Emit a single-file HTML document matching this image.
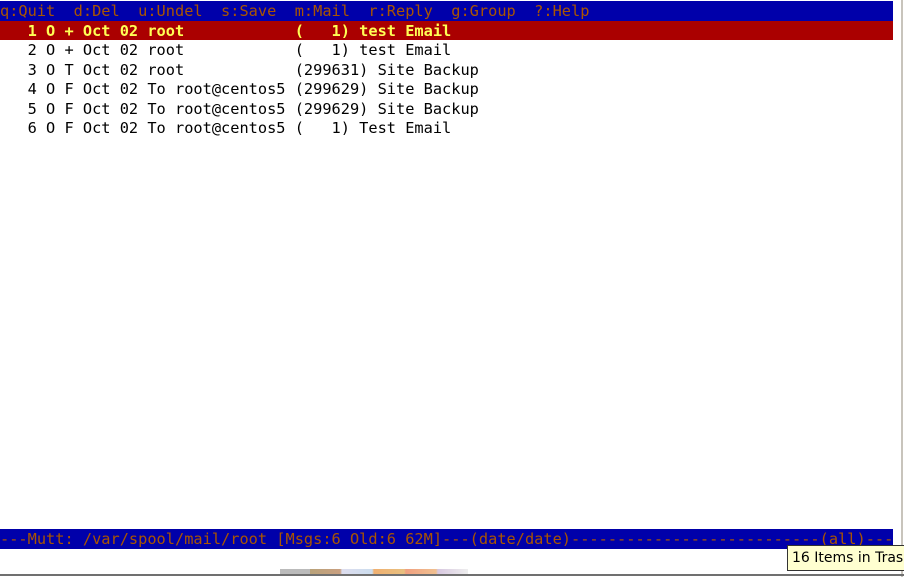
<!DOCTYPE html>
<html><head><meta charset="utf-8"><style>
html,body{margin:0;padding:0;background:#fff;width:904px;height:577px;overflow:hidden;position:relative}
.t{position:absolute;left:0;width:893px;height:19.5px;font-family:"DejaVu Sans Mono","Liberation Mono",monospace;font-size:15.3px;line-height:21px;white-space:pre;color:#000;overflow:hidden}
.bar{background:#0000aa;color:#aa5500}
.sel{background:#aa0000;color:#ffff55;font-weight:bold}
</style></head><body>
<div class="t bar" style="top:1px">q:Quit  d:Del  u:Undel  s:Save  m:Mail  r:Reply  g:Group  ?:Help</div>
<div class="t sel" style="top:20.5px">   1 O + Oct 02 root            (   1) test Email</div>
<div class="t" style="top:40px">   2 O + Oct 02 root            (   1) test Email</div>
<div class="t" style="top:59.5px">   3 O T Oct 02 root            (299631) Site Backup</div>
<div class="t" style="top:79px">   4 O F Oct 02 To root@centos5 (299629) Site Backup</div>
<div class="t" style="top:98.5px">   5 O F Oct 02 To root@centos5 (299629) Site Backup</div>
<div class="t" style="top:118px">   6 O F Oct 02 To root@centos5 (   1) Test Email</div>
<div class="t bar" style="top:529px">---Mutt: /var/spool/mail/root [Msgs:6 Old:6 62M]---(date/date)---------------------------(all)---</div>
<div style="position:absolute;left:901px;top:0;width:2px;height:577px;background:#c8c4bc"></div>
<div style="position:absolute;left:0;top:574px;width:904px;height:2px;background:#707070"></div>
<div style="position:absolute;left:280px;top:569px;width:188px;height:5px;background:linear-gradient(90deg,#bbb 0,#bbb 16%,#b9a27a 16%,#c9a080 32%,#dde 33%,#cde 49%,#f0b070 50%,#e8c080 66%,#f0a080 67%,#f0c090 83%,#d8c8e0 84%,#eee 100%)"></div>
<div style="position:absolute;left:787px;top:545px;width:130px;height:26px;background:#ffffd0;border:1px solid #333;box-sizing:border-box;font-family:'DejaVu Sans','Liberation Sans',sans-serif;font-size:14px;line-height:24px;padding-left:4px;white-space:nowrap;color:#000">16 Items in Trash</div>
</body></html>
